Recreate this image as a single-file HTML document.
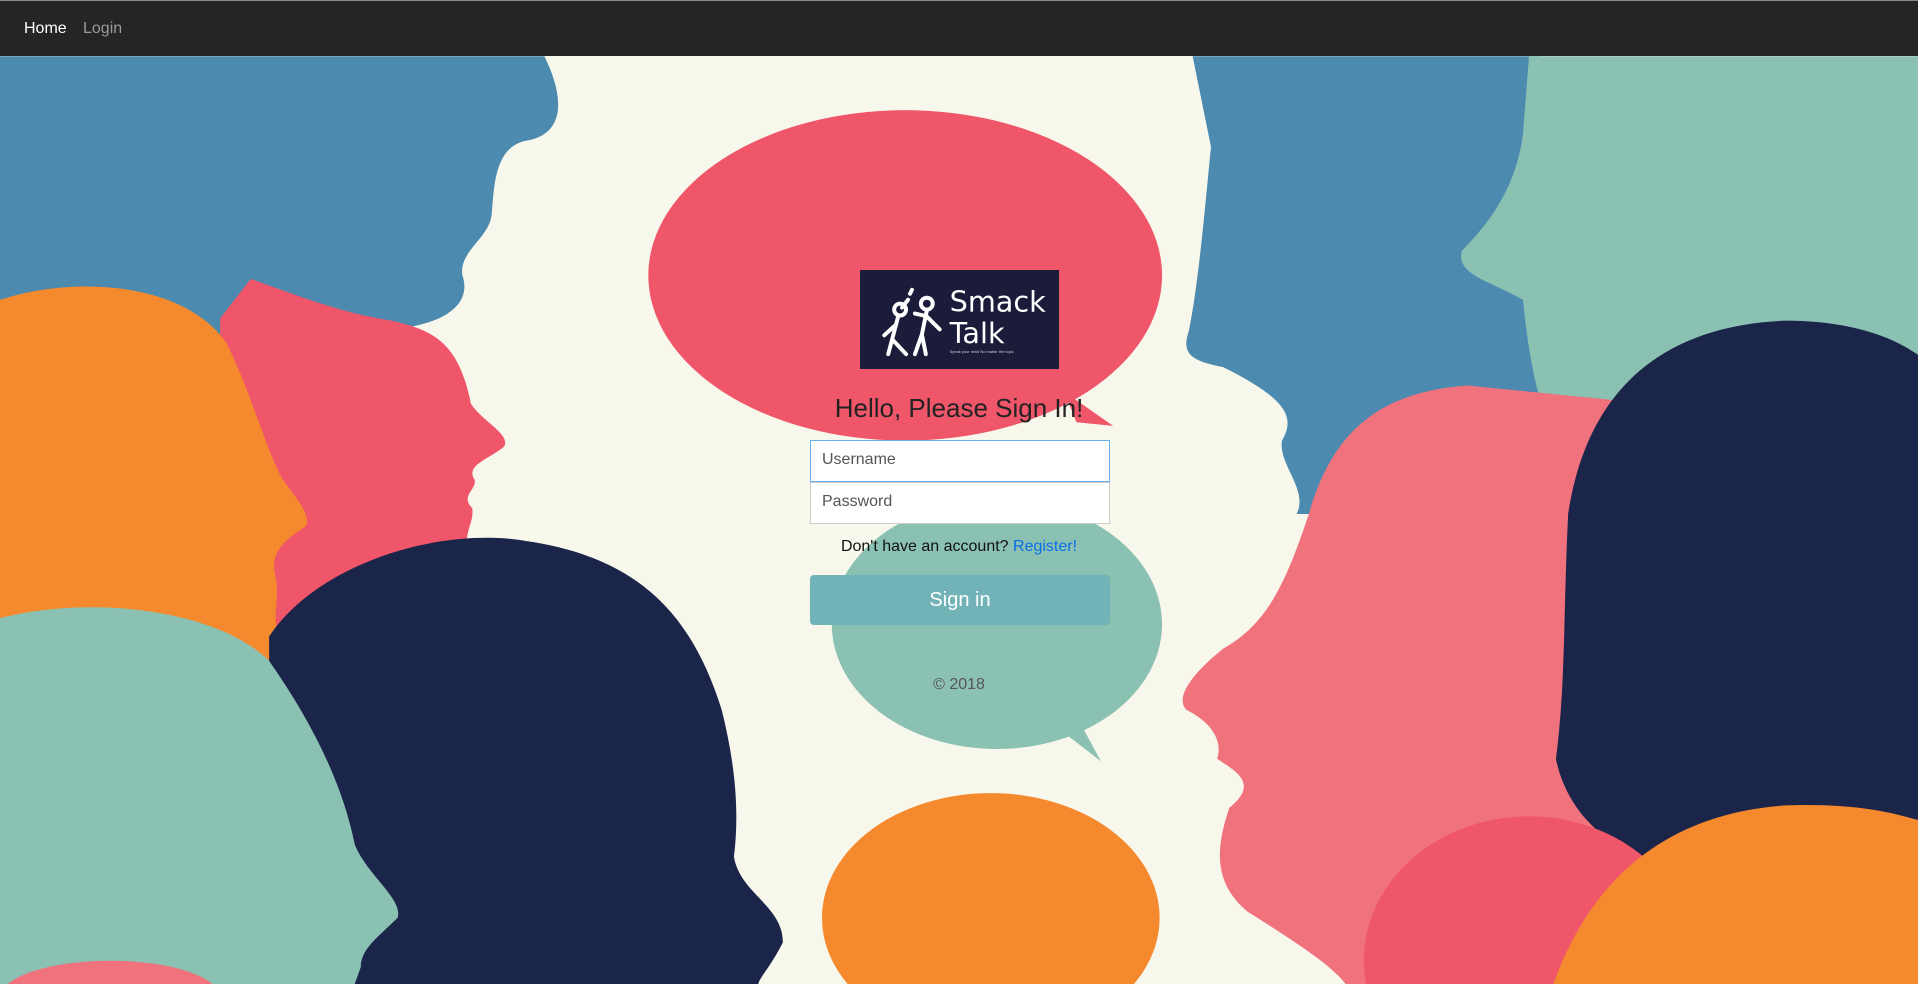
<!DOCTYPE html>
<html><head><meta charset="utf-8">
<style>
html,body{margin:0;padding:0;width:1918px;height:984px;overflow:hidden;background:#f8f7ec;font-family:"Liberation Sans",sans-serif;position:relative}
#bg{position:absolute;left:0;top:0;width:1918px;height:984px;display:block}
nav{position:absolute;left:0;top:0;width:1918px;height:56px;background:#242527;border-top:1px solid #888;box-sizing:border-box}
nav span{position:absolute;top:19px;font-size:16px}
.logo{position:absolute;left:860px;top:270px;width:199px;height:99px;background:#1b1c3a;overflow:hidden}
h3{position:absolute;left:0;width:1918px;top:393px;margin:0;text-align:center;font-weight:400;font-size:26px;color:#222}
.inp{position:absolute;left:810px;width:300px;height:42px;box-sizing:border-box;background:#fff;border:1px solid #ccc;font-size:16px;color:#555;padding:10px 11px}
.reg{position:absolute;left:0;width:1918px;text-align:center;top:538px;font-size:16px;color:#111}
.btn{position:absolute;left:810px;top:575px;width:300px;height:50px;background:#72b3b8;border-radius:4px;color:#fff;font-size:20px;text-align:center;line-height:50px}
.copy{position:absolute;left:0;width:1918px;text-align:center;top:676px;font-size:16px;color:#555}
</style></head><body>
<svg id="bg" viewBox="0 0 1568 804" preserveAspectRatio="none">
<rect width="1568" height="804" fill="#f8f7ec"/>
<path fill="#4d8aaf" d="M0,46 L445,46 C462,80 462,110 430,115 C405,120 404,150 402,175 C400,195 375,205 378,225 C385,245 370,262 330,268 L260,300 L0,300 Z"/>
<path fill="#ef5669" d="M205,228 C240,240 275,255 320,262 C355,270 375,280 385,330 C395,345 418,355 412,365 C400,375 380,380 388,392 C390,400 376,405 386,415 C388,425 380,435 382,445 L382,520 L180,520 L180,260 Z"/>
<path fill="#f5892e" d="M0,245 C60,225 150,230 185,280 C205,320 215,360 230,390 C240,405 255,420 250,430 C235,440 220,450 225,470 C230,490 220,505 230,525 L230,560 L0,560 Z"/>
<path fill="#1b2449" d="M220,520 C260,460 360,430 430,442 C520,455 565,500 590,580 C600,620 605,660 600,700 C605,730 640,740 640,770 C630,790 620,800 620,804 L220,804 Z"/>
<path fill="#8bc1b3" d="M0,505 C80,485 180,500 220,540 C255,590 280,640 290,690 C300,715 330,735 325,750 C310,765 295,775 295,790 L290,804 L0,804 Z"/>
<ellipse cx="90" cy="815" rx="90" ry="30" fill="#f0727d"/>
<ellipse cx="740" cy="225" rx="210" ry="135" fill="#ef5669"/>
<path fill="#ef5669" d="M870,320 L910,348 L880,345 Z"/>
<ellipse cx="815" cy="510" rx="135" ry="102" fill="#8bc1b3"/>
<path fill="#8bc1b3" d="M865,595 L900,622 L880,585 Z"/>
<ellipse cx="810" cy="750" rx="138" ry="102" fill="#f5892e"/>
<path fill="#4d8aaf" d="M975,46 L1260,46 L1260,420 L1060,420 C1070,400 1045,380 1048,360 C1060,340 1050,325 1000,300 C975,295 965,290 972,270 C980,230 985,170 990,120 Z"/>
<path fill="#8bc1b3" d="M1250,46 L1568,46 L1568,380 L1280,380 C1255,330 1250,290 1245,245 C1220,230 1190,225 1195,205 C1220,180 1240,150 1245,110 Z"/>
<path fill="#f0727d" d="M1200,315 C1130,320 1090,350 1070,420 C1050,480 1035,510 1000,530 C975,550 960,570 970,580 C990,590 1000,605 995,620 C1010,630 1030,640 1005,660 C995,690 990,720 1020,745 C1060,770 1090,790 1100,804 L1350,804 L1350,330 Z"/>
<path fill="#1b2449" d="M1460,262 C1380,265 1300,300 1282,420 C1278,500 1280,560 1272,620 C1280,660 1310,690 1345,700 L1345,804 L1568,804 L1568,290 C1540,270 1500,262 1460,262 Z"/>
<ellipse cx="1250" cy="785" rx="135" ry="118" fill="#ef5669"/>
<path fill="#f5892e" d="M1270,804 C1300,720 1360,665 1460,658 C1520,656 1550,665 1568,670 L1568,804 Z"/>
</svg>
<nav><span style="left:24px;color:#fff">Home</span><span style="left:83px;color:#9a9a9a">Login</span></nav>
<div class="logo">
<svg width="199" height="99" viewBox="0 0 200 100">
<g fill="none" stroke="#fff" stroke-width="4" stroke-linecap="round">
<circle cx="40" cy="40" r="6"/><circle cx="67" cy="34" r="6"/>
<path d="M42 38 L48 30 M50 24 L52 20"/>
<path d="M38 47 L32 70 M36 55 L24 66 M32 70 L46 85 M32 70 L28 85"/>
<path d="M67 41 L62 65 L55 85 M62 65 L66 85 M66 46 L80 60 M64 46 L55 44"/>
</g>
<text x="90" y="42" font-family="DejaVu Sans,sans-serif" font-size="29" fill="#fff">Smack</text>
<text x="90" y="74" font-family="DejaVu Sans,sans-serif" font-size="29" fill="#fff">Talk</text>
<text x="90" y="84" font-size="4" fill="#ccc">Speak your mind No matter the topic</text>
</svg></div>
<h3>Hello, Please Sign In!</h3>
<div class="inp" style="top:440px;border-color:#66aff0">Username</div>
<div class="inp" style="top:482px">Password</div>
<div class="reg">Don't have an account? <span style="color:#0a6ee6">Register!</span></div>
<div class="btn">Sign in</div>
<div class="copy">© 2018</div>
</body></html>
